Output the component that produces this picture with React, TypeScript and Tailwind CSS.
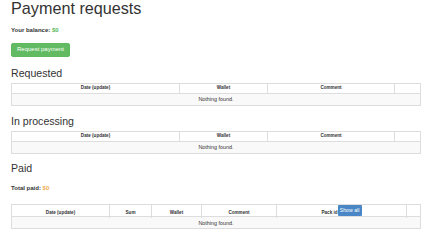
const COLS_SHORT = ["Date (update)", "Wallet", "Comment", ""];
const COLS_PAID = ["Date (update)", "Sum", "Wallet", "Comment", "Pack id", ""];

function EmptyTable({
  columns,
  gridClass,
  headClass,
  extra,
}: {
  columns: string[];
  gridClass: string;
  headClass: string;
  extra?: Record<number, React.ReactNode>;
}) {
  return (
    <div className="w-[410px] border border-[#ddd]">
      <div className={`grid ${gridClass} ${headClass} border-b border-[#ddd] bg-white`}>
        {columns.map((c, i) => (
          <div
            key={i}
            className={`flex items-end justify-center pb-[2px] text-[4.6px] font-bold leading-[6px] text-[#333] ${
              i > 0 ? "border-l border-[#ddd]" : ""
            }`}
          >
            <span>{c}</span>
            {extra?.[i]}
          </div>
        ))}
      </div>
      <div className="flex h-[11px] items-center justify-center bg-[#f9f9f9] text-[5.4px] text-[#333]">
        Nothing found.
      </div>
    </div>
  );
}

export default function App() {
  return (
    <div
      className="h-[250px] w-[436px] overflow-hidden bg-white px-[11px] text-[#333]"
      style={{ fontFamily: '"Liberation Sans", Arial, sans-serif' }}
    >
      <h1 className="text-[16.2px] leading-[17.6px] font-normal">Payment requests</h1>

      <p className="mt-[8px] text-[6px] leading-[8.6px] font-bold">
        Your balance: <span className="text-[#5cb85c]">$0</span>
      </p>

      <button className="mt-[8.5px] flex h-[14.5px] w-[59px] items-center justify-center rounded-[2px] border border-[#5fba5f] bg-[#62bb62] text-[6px] text-white">
        Request payment
      </button>

      <h3 className="mt-[10.5px] text-[10.6px] leading-[11.6px]">Requested</h3>
      <div className="mt-[3.7px]">
        <EmptyTable
          columns={COLS_SHORT}
          gridClass="grid-cols-[167px_88px_127px_1fr]"
          headClass="h-[10px]"
        />
      </div>

      <h3 className="mt-[10.5px] text-[10.6px] leading-[11.6px]">In processing</h3>
      <div className="mt-[2.7px]">
        <EmptyTable
          columns={COLS_SHORT}
          gridClass="grid-cols-[167px_88px_127px_1fr]"
          headClass="h-[10px]"
        />
      </div>

      <h3 className="mt-[9.3px] text-[10.6px] leading-[11.6px]">Paid</h3>
      <p className="mt-[9.6px] text-[6px] leading-[8.6px] font-bold">
        Total paid: <span className="text-[#f0ad4e]">$0</span>
      </p>

      <div className="mt-[11.6px]">
        <EmptyTable
          columns={COLS_PAID}
          gridClass="grid-cols-[97px_42px_50px_75px_130px_1fr]"
          headClass="h-[12px]"
          extra={{
            4: (
              <button className="mt-[-0.5px] flex h-[11px] w-[24px] shrink-0 self-start items-center justify-center rounded-[1px] bg-[#4a86c5] text-[5.2px] font-normal text-white">
                Show all
              </button>
            ),
          }}
        />
      </div>
    </div>
  );
}
